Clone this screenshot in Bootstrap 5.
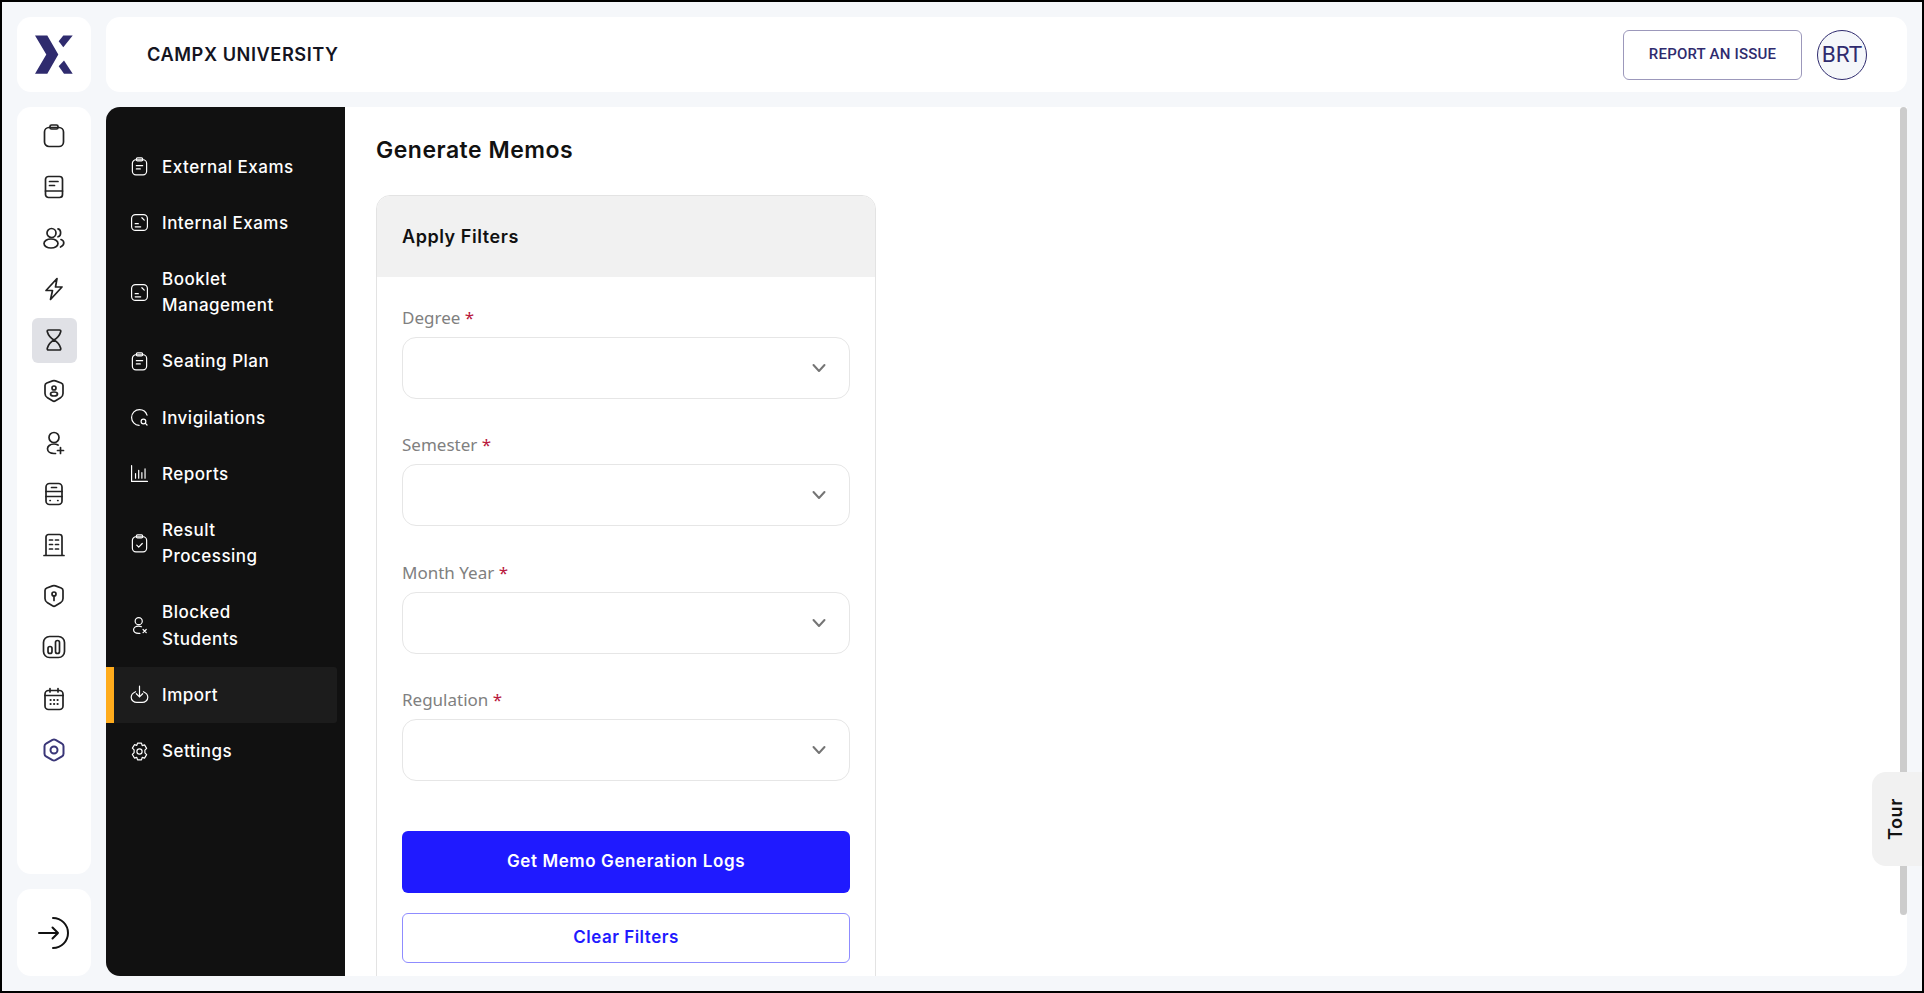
<!doctype html>
<html lang="en">
<head>
<meta charset="utf-8">
<title>Generate Memos</title>
<link href="https://cdn.jsdelivr.net/npm/bootstrap@5.3.0/dist/css/bootstrap.min.css" rel="stylesheet">
<style>
html,body{height:100%;margin:0;overflow:hidden}
body{font-family:"Inter","Liberation Sans",sans-serif;color:#121212}
.frame{height:993px;border:2px solid #000;background:#f5f7fa;padding:15px;gap:15px;position:relative;overflow:hidden}
.rail-col{width:74px;gap:15px;flex:none}
.panel{background:#fff;border-radius:14px}
.logo-box{height:75px;flex:none}
.main-col{gap:15px;min-width:0;min-height:0}
.top-head{height:75px;flex:none;padding:0 40px 0 41px}
.org{font-size:18.2px;font-weight:600;letter-spacing:.55px;color:#14141f}
.head-tools{gap:15px}
.report-btn{width:179px;height:50px;border:1px solid #9c98bb;border-radius:6px;font-family:Roboto,sans-serif;font-weight:500;font-size:15px;letter-spacing:.2px;color:#2f2b6e;background:#fff;padding:0}
.avatar{width:50px;height:50px;border:1px solid #2f2b6e;border-radius:50%;background:#f5f7fa;font-family:Roboto,sans-serif;font-size:22.500px;color:#2f2b6e}
.rail{padding-top:6px;gap:6.2px;min-height:0}
.rail-item{width:45px;height:45px;border-radius:6px}
.rail-item.on{background:#e0e1e6}
.rail-item svg{width:24px;height:24px;fill:none;stroke:#222;stroke-width:1.7;stroke-linecap:round;stroke-linejoin:round}
.rail-item.brand svg{stroke:#3a3678;stroke-width:2}
.exit-box{height:87px;flex:none}
.exit-box svg{width:36px;height:36px;fill:none;stroke:#111;stroke-width:2;stroke-linecap:round;stroke-linejoin:round}
.work{flex:1 1 0;min-height:0}
.side{width:239px;flex:none;background:#111;border-radius:14px 0 0 14px;padding:31.500px 8px 0 0}
.side-item{display:flex;align-items:center;padding:15px 0 15px 24px;color:#fff;font-size:17px;font-weight:500;line-height:26.2px;letter-spacing:.5px}
.side-item svg{width:19px;height:19px;flex:none;margin-right:13px;fill:none;stroke:#fff;stroke-width:1.5;stroke-linecap:round;stroke-linejoin:round}
.side-item.on{background:#1c1c1c;padding-left:16px;border-left:8px solid #ffac1c;border-radius:0 3px 3px 0}
.content{background:#fff;border-radius:0 0 14px 0;overflow:hidden;min-height:0}
.inner{height:934px;padding:27px 0 0 31px}
.page-title{font-size:23px;font-weight:600;color:#111;line-height:32px;margin:0 0 29px;letter-spacing:.5px}
.filter-card{width:500px;height:800px;border:1px solid #e3e3e3;border-radius:14px;overflow:hidden}
.filter-card .card-header{height:81px;flex:none;background:#f1f1f1;border:0;border-radius:0;padding:0 25px;display:flex;align-items:center;font-size:18px;font-weight:600;letter-spacing:.55px;color:#111}
.filter-card .card-body{padding:29px 25px 0}
.fld{margin-bottom:34.300px}
.fld label{display:block;font-family:"Noto Sans",sans-serif;font-size:17px;line-height:24px;color:#808080;margin-bottom:7px}
.fld label i{font-style:normal;color:#b8163c}
.fld .form-select{height:62px;border:1px solid #e6e6e6;border-radius:14px;box-shadow:none;--bs-form-select-bg-img:url("data:image/svg+xml,%3csvg xmlns='http://www.w3.org/2000/svg' viewBox='0 0 16 16'%3e%3cpath fill='none' stroke='%23757575' stroke-linecap='round' stroke-linejoin='round' stroke-width='2' d='m2.5 5 5.500 6 5.500-6'/%3e%3c/svg%3e");background-position:right 22px center;background-size:16px 16px}
.go-btn{height:62px;background:#1f1aff;border:0;border-radius:6px;color:#fff;font-size:17px;font-weight:600;letter-spacing:.6px;margin-top:16px}
.clear-btn{height:50px;background:#fff;border:1px solid #8f8cff;border-radius:6px;color:#1f1aff;font-size:17px;font-weight:600;letter-spacing:.5px;margin-top:20px}
.scroll-thumb{position:absolute;right:15px;top:105px;width:7px;height:808px;background:#ccc;border-radius:4px}
.tour-tab{position:absolute;right:0;top:770px;width:50px;height:94px;background:#f1f1f1;border-radius:14px 0 0 14px;font-weight:600;font-size:18px;letter-spacing:.6px;color:#111;padding-right:3px}
.tour-tab span{writing-mode:vertical-rl;transform:rotate(180deg)}
</style>
</head>
<body>
<div class="frame d-flex">
  <div class="rail-col d-flex flex-column">
    <div class="panel logo-box d-flex align-items-center justify-content-center">
      <svg width="40" height="42" viewBox="0 0 40 42" aria-label="CampX logo"><path fill="#2f2b6e" d="M1 1.500h12.300l11 19-11 19.300H1l11.300-19.300z"/><path fill="#2f2b6e" d="M29.300 1.500h9.400L29.300 13.200l-4.600-6z"/><path fill="#2f2b6e" d="M30 26.500l8.700 13.300H30l-5.300-7.600z"/></svg>
    </div>
    <div class="panel rail flex-grow-1 d-flex flex-column align-items-center">
      <div class="rail-item d-flex align-items-center justify-content-center"><svg viewBox="0 0 24 24"><rect x="2.500" y="3.500" width="19" height="19" rx="4.500"/><rect x="8" y="1" width="8" height="4" rx="1.500"/></svg></div>
      <div class="rail-item d-flex align-items-center justify-content-center"><svg viewBox="0 0 24 24"><rect x="3.500" y="1.500" width="17" height="21" rx="3"/><path d="M3.500 16h17M7.500 6.500h8.500M7.500 10.500h5"/></svg></div>
      <div class="rail-item d-flex align-items-center justify-content-center"><svg viewBox="0 0 24 24"><circle cx="9.500" cy="7" r="4.500"/><ellipse cx="9" cy="17.500" rx="7" ry="4.500"/><path d="M16 2.800c3.500.7 3.500 7 0 8M19 13.500c3.800 1.200 3.800 5.800-.5 7.500"/></svg></div>
      <div class="rail-item d-flex align-items-center justify-content-center"><svg viewBox="0 0 24 24"><path d="M15 1.500 4 13.500h6.500l-2 9L20 10h-6.500z"/></svg></div>
      <div class="rail-item on d-flex align-items-center justify-content-center"><svg viewBox="0 0 24 24"><path d="M6.500 2h11c1 0 1.500.8 1.200 1.800C17.800 7 15.500 10 12 12c3.500 2 5.800 5 6.700 8.200.3 1-.2 1.800-1.200 1.800h-11c-1 0-1.500-.8-1.200-1.800C6.200 17 8.500 14 12 12 8.500 10 6.200 7 5.300 3.800 5 2.800 5.500 2 6.500 2z"/></svg></div>
      <div class="rail-item d-flex align-items-center justify-content-center"><svg viewBox="0 0 24 24"><path d="M10.500 1.900 4.800 4C3.700 4.400 3 5.400 3 6.500v8c0 1.800 1 3.400 2.500 4.300l5 3c.9.600 2.100.600 3 0l5-3c1.500-.9 2.500-2.500 2.500-4.300v-8c0-1.100-.7-2.100-1.800-2.500l-5.700-2.100c-1-.3-2-.3-3 0z"/><circle cx="12" cy="9" r="2"/><ellipse cx="12" cy="15" rx="3.500" ry="2"/></svg></div>
      <div class="rail-item d-flex align-items-center justify-content-center"><svg viewBox="0 0 24 24"><circle cx="12" cy="6.500" r="5"/><path d="M16 14c-1.200-.6-2.600-1-4-1-4 0-6.500 2.300-6.500 4.800S8 22.500 12 22.500h1.500M15.500 19.500h6M18.500 16.500v6"/></svg></div>
      <div class="rail-item d-flex align-items-center justify-content-center"><svg viewBox="0 0 24 24"><rect x="4" y="1.500" width="16" height="21" rx="3.500"/><path d="M4 9.500h16M4 14.500h16M9.500 5.500h5M8 18.500h.3M15.700 18.500h.3"/></svg></div>
      <div class="rail-item d-flex align-items-center justify-content-center"><svg viewBox="0 0 24 24"><path d="M4 22.500V4a2.500 2.500 0 0 1 2.500-2.500h11A2.500 2.500 0 0 1 20 4v18.500M2 22.500h20M7.500 7h3M13.500 7h3M7.500 11.500h3M13.500 11.500h3M7.500 16h3M13.500 16h3"/></svg></div>
      <div class="rail-item d-flex align-items-center justify-content-center"><svg viewBox="0 0 24 24"><path d="M10.500 1.900 4.800 4C3.700 4.400 3 5.400 3 6.500v8c0 1.800 1 3.400 2.500 4.300l5 3c.9.600 2.100.600 3 0l5-3c1.500-.9 2.500-2.500 2.500-4.300v-8c0-1.100-.7-2.100-1.800-2.500l-5.700-2.100c-1-.3-2-.3-3 0z"/><circle cx="12" cy="10" r="2"/><path d="M12 12v4.500"/></svg></div>
      <div class="rail-item d-flex align-items-center justify-content-center"><svg viewBox="0 0 24 24"><rect x="1.500" y="1.500" width="21" height="21" rx="6"/><rect x="6" y="11.500" width="4" height="7" rx="2"/><rect x="13.500" y="5.500" width="4" height="13" rx="2"/></svg></div>
      <div class="rail-item d-flex align-items-center justify-content-center"><svg viewBox="0 0 24 24"><rect x="3" y="3.500" width="18" height="19" rx="3.500"/><path d="M3 8.500h18M8 1.500v3.500M16 1.500v3.500"/><path stroke-width="2" d="M8.500 13h.2M12 13h.2M15.500 13h.2M8.500 17h.2M12 17h.2M15.500 17h.2"/></svg></div>
      <div class="rail-item brand d-flex align-items-center justify-content-center"><svg viewBox="0 0 24 24"><path d="M10.500 1.900 4 5.600c-1 .5-1.500 1.500-1.500 2.600v7.600c0 1.100.5 2.100 1.500 2.600l6.500 3.700c1 .5 2 .5 3 0l6.500-3.700c1-.5 1.500-1.500 1.500-2.600V8.200c0-1.100-.5-2.100-1.500-2.600l-6.500-3.700c-1-.5-2-.5-3 0z"/><circle cx="12" cy="12" r="3.500"/></svg></div>
    </div>
    <div class="panel exit-box d-flex align-items-center justify-content-center">
      <svg viewBox="0 0 36 36"><path d="M3 18h19M16.500 12.500 22 18l-5.500 5.500M17 3a15 15 0 0 1 0 30"/></svg>
    </div>
  </div>
  <div class="main-col flex-grow-1 d-flex flex-column">
    <div class="panel top-head d-flex align-items-center justify-content-between">
      <div class="org">CAMPX UNIVERSITY</div>
      <div class="head-tools d-flex align-items-center">
        <button type="button" class="btn report-btn">REPORT AN ISSUE</button>
        <div class="avatar d-flex align-items-center justify-content-center">BRT</div>
      </div>
    </div>
    <div class="work d-flex">
      <nav class="side">
        <div class="side-item"><svg viewBox="0 0 24 24"><rect x="3" y="3.500" width="18" height="19" rx="4.500"/><rect x="8" y="1" width="8" height="4" rx="1.500"/><path d="M8 11h8M8 15h5"/></svg>External Exams</div>
        <div class="side-item"><svg viewBox="0 0 24 24"><rect x="2" y="2" width="20" height="20" rx="5"/><path d="M6.500 17.500h7M6.500 13.500h4M15 6l3 3"/></svg>Internal Exams</div>
        <div class="side-item"><svg viewBox="0 0 24 24"><rect x="2" y="2" width="20" height="20" rx="5"/><path d="M6.500 17.500h7M6.500 13.500h4M15 6l3 3"/></svg><span>Booklet<br>Management</span></div>
        <div class="side-item"><svg viewBox="0 0 24 24"><rect x="3" y="3.500" width="18" height="19" rx="4.500"/><rect x="8" y="1" width="8" height="4" rx="1.500"/><path d="M8 11h8M8 15h5"/></svg>Seating Plan</div>
        <div class="side-item"><svg viewBox="0 0 24 24"><path d="M21.500 9A10 10 0 0 0 12 2a10 10 0 0 0-10 10c0 5 4 9.500 9.500 10"/><circle cx="17" cy="17" r="3"/><path d="m19.500 19.500 2 2"/></svg>Invigilations</div>
        <div class="side-item"><svg viewBox="0 0 24 24"><path d="M2 2v20h20M7 18v-6M11 18V8M15 18v-7M19 18V6"/></svg>Reports</div>
        <div class="side-item"><svg viewBox="0 0 24 24"><rect x="3" y="3.500" width="18" height="19" rx="4.500"/><rect x="8" y="1" width="8" height="4" rx="1.500"/><path d="m8.500 14 2.500 2.500 4.500-4.500"/></svg><span>Result<br>Processing</span></div>
        <div class="side-item"><svg viewBox="0 0 24 24"><circle cx="11" cy="6.500" r="4.500"/><path d="M14.500 13.500c-1-.4-2.200-.7-3.500-.7-4 0-6.500 2.300-6.500 4.700S7 22 11 22h1.500M16.500 17l4 4M20.500 17l-4 4"/></svg><span>Blocked<br>Students</span></div>
        <div class="side-item on"><svg viewBox="0 0 24 24"><path d="M12 1.500V15M8 11l4 4 4-4M7 8.500C4 9.800 1.500 12.500 1.500 15.500c0 4 3.500 6.500 7 6.500h7c3.500 0 7-2.500 7-6.500 0-3-2.500-5.700-5.500-7"/></svg>Import</div>
        <div class="side-item"><svg viewBox="0 0 24 24"><path d="M9.500 1.500h5l.9 3 3-.8 2.600 4.300-2.200 2.300v3.400l2.200 2.300-2.600 4.300-3-.8-.9 3h-5l-.9-3-3 .8L3 15.700l2.200-2.300V10L3 7.700l2.600-4.300 3 .8z"/><circle cx="12" cy="12" r="3.300"/></svg>Settings</div>
      </nav>
      <main class="content flex-grow-1">
        <div class="inner">
          <h1 class="page-title">Generate Memos</h1>
          <div class="card filter-card">
            <div class="card-header">Apply Filters</div>
            <div class="card-body">
              <div class="fld"><label>Degree <i>*</i></label><select class="form-select"></select></div>
              <div class="fld"><label>Semester <i>*</i></label><select class="form-select"></select></div>
              <div class="fld"><label>Month Year <i>*</i></label><select class="form-select"></select></div>
              <div class="fld"><label>Regulation <i>*</i></label><select class="form-select"></select></div>
              <button type="button" class="btn go-btn w-100">Get Memo Generation Logs</button>
              <button type="button" class="btn clear-btn w-100">Clear Filters</button>
            </div>
          </div>
        </div>
      </main>
    </div>
  </div>
  <div class="scroll-thumb"></div>
  <div class="tour-tab d-flex align-items-center justify-content-center"><span>Tour</span></div>
</div>
<script src="https://cdn.jsdelivr.net/npm/bootstrap@5.3.0/dist/js/bootstrap.bundle.min.js"></script>
</body>
</html>
